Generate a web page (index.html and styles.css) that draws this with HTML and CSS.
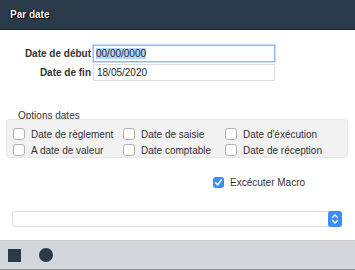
FILE: index.html
```html
<!DOCTYPE html>
<html lang="fr">
<head>
    <meta charset="UTF-8">
    <title>Par date</title>
    <link rel="stylesheet" href="styles.css">
</head>
<body>
    <div class="header">Par date</div>
    <div class="content">
        <div class="dates">
            <label class="field-label">Date de début</label>
            <div class="input focus"><span class="selected">00/00/0000</span></div>
            <label class="field-label">Date de fin</label>
            <div class="input">18/05/2020</div>
        </div>

        <div class="group-title">Options dates</div>
        <div class="group">
            <div class="check"><span class="box"></span>Date de règlement</div>
            <div class="check"><span class="box"></span>Date de saisie</div>
            <div class="check"><span class="box"></span>Date d'éxécution</div>
            <div class="check"><span class="box"></span>A date de valeur</div>
            <div class="check"><span class="box"></span>Date comptable</div>
            <div class="check"><span class="box"></span>Date de réception</div>
        </div>

        <div class="macro">
            <div class="check"><span class="box checked">
                <svg width="11" height="11" viewBox="0 0 11 11"><path d="M2.6 5.8 L4.6 7.9 L8.4 2.8" fill="none" stroke="#fff" stroke-width="1.6" stroke-linecap="round" stroke-linejoin="round"/></svg>
            </span>Excécuter Macro</div>
        </div>

        <div class="select">
            <span class="stepper">
                <svg width="14" height="16" viewBox="0 0 14 16"><path d="M4.5 6.5 L7 4 L9.5 6.5 M4.5 9.5 L7 12 L9.5 9.5" fill="none" stroke="#fff" stroke-width="1.4" stroke-linecap="round" stroke-linejoin="round"/></svg>
            </span>
        </div>
    </div>
    <div class="footer">
        <span class="square"></span>
        <span class="circle"></span>
    </div>
</body>
</html>
```

FILE: styles.css
```css
body {
    margin: 0;
    width: 355px;
    height: 270px;
    display: flex;
    flex-direction: column;
    background: #fff;
    font-family: "Liberation Sans", Arial, sans-serif;
    font-size: 10px;
    color: #2a2a2a;
    overflow: hidden;
}
.header {
    height: 29px;
    line-height: 30px;
    padding-left: 10px;
    background: #2b3a4b;
    border-bottom: 1px solid #1c2632;
    color: #fff;
    font-weight: bold;
    font-size: 10px;
    text-shadow: 0 0 1px #000, 1px 1px 0 #000, -1px 0 0 #000;
}
.content {
    flex: 1;
    display: flex;
    flex-direction: column;
}
.dates {
    display: grid;
    grid-template-columns: 91px 182px;
    column-gap: 2px;
    row-gap: 2px;
    margin-top: 15px;
    align-items: center;
}
.field-label {
    text-align: right;
    font-weight: bold;
    color: #333;
}
.input {
    height: 15px;
    line-height: 15px;
    border: 1px solid #dedede;
    padding-left: 3px;
    color: #222;
}
.input.focus {
    border: 1px solid #8fb9ee;
    box-shadow: 0 0 0 1px #c6dcf7;
    padding-left: 2px;
}
.selected {
    background: #b4d5fe;
}
.group-title {
    margin: 30px 0 0 18px;
    height: 10px;
    line-height: 10px;
    color: #333;
}
.group {
    margin: -2px 7px 0 6px;
    background: #f2f2f2;
    border: 1px solid #e6e6e6;
    border-radius: 4px;
    display: grid;
    grid-template-columns: 110px 102px auto;
    grid-auto-rows: 16px;
    padding: 6px 0 0 6px;
    box-sizing: border-box;
    height: 39px;
}
.check {
    display: flex;
    align-items: center;
    color: #333;
    white-space: nowrap;
}
.box {
    width: 10px;
    height: 10px;
    border: 1px solid #b3b3b3;
    border-radius: 3px;
    background: #fff;
    margin-right: 6px;
    flex: none;
}
.box.checked {
    width: 11px;
    height: 11px;
    border: none;
    background: #3a8df5;
    margin-right: 6px;
}
.box svg {
    display: block;
}
.macro {
    margin: 19px 0 0 213px;
}
.select {
    margin: 23px 13px 0 12px;
    height: 14px;
    border: 1px solid #dcdcdc;
    border-radius: 3px;
    display: flex;
    justify-content: flex-end;
}
.stepper {
    width: 14px;
    height: 16px;
    margin: -1px -1px 0 0;
    background: #3b8ef4;
    border-radius: 3px;
}
.stepper svg {
    display: block;
}
.footer {
    background: #d3d6da;
    border-top: 1px solid #c9ccd0;
    border-bottom: 1px solid #8e9195;
    display: flex;
    align-items: center;
    padding-left: 8px;
    gap: 18px;
    box-sizing: border-box;
    height: 30px;
}
.square {
    width: 13px;
    height: 13px;
    background: #2b3a4b;
}
.circle {
    width: 14px;
    height: 14px;
    border-radius: 50%;
    background: #2b3a4b;
}
```
